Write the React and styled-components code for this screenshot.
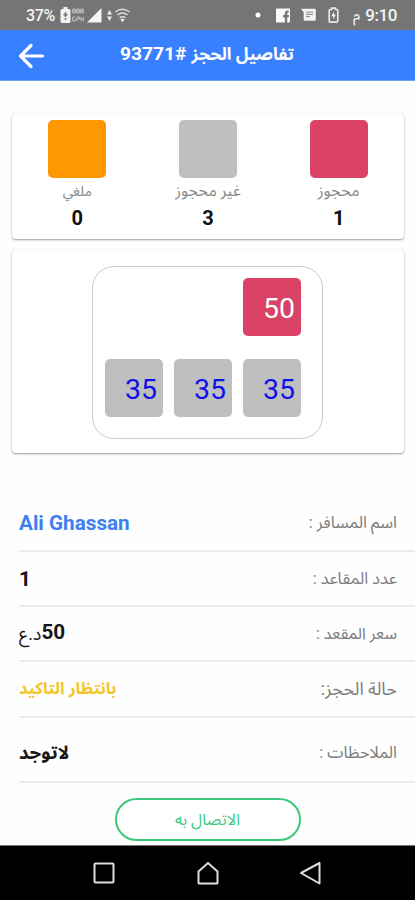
import React from 'react';
import styled, { createGlobalStyle } from 'styled-components';

const GlobalStyle = createGlobalStyle`
    * {
        box-sizing: border-box;
    }

    body {
        margin: 0;
        background-color: #fefefe;
        font-family: Roboto, "Noto Sans Arabic", "DejaVu Sans", sans-serif;
    }
`;

const Screen = styled.div`
    display: flex;
    flex-direction: column;
    width: 415px;
    height: 900px;
    overflow: hidden;
    background-color: #fefefe;
`;

const StatusBar = styled.div`
    display: flex;
    justify-content: space-between;
    align-items: center;
    height: 30px;
    padding: 0 18px 0 26px;
    background-color: #757575;
    color: #f4f4f4;
    font-size: 16px;
    font-weight: 500;
`;

const StatusGroup = styled.div`
    display: flex;
    align-items: center;
    height: 30px;
`;

const Percent = styled.span`
    width: 34px;
    font-size: 16px;
    letter-spacing: -0.3px;
`;

const Clock = styled.span`
    font-size: 17px;
    letter-spacing: -0.4px;
`;

const Meridiem = styled.span`
    margin-right: 5px;
    font-size: 14px;
`;

const Header = styled.header`
    display: flex;
    align-items: center;
    height: 51px;
    padding: 1px 18px 0;
    background-color: #3880ff;
    color: #fff;
    border-bottom: 1px solid #6c9ff5;
`;

const Title = styled.h1`
    display: flex;
    align-items: center;
    gap: 5px;
    margin: 0 0 4px 75px;
    font-size: 19.2px;
    font-weight: 700;
    line-height: 24px;
    white-space: nowrap;
`;

const Arabic = styled.span`
    font-size: ${({ $size }) => $size}px;
    font-weight: ${({ $weight }) => $weight || 400};
    white-space: nowrap;
`;

const Card = styled.section`
    margin: 0 11px 0 12px;
    background-color: #fff;
    border-radius: 4px;
    box-shadow: 0 1px 2px rgba(0, 0, 0, 0.38), 0 0 3px rgba(0, 0, 0, 0.04);
`;

const Legend = styled(Card)`
    display: grid;
    grid-template-columns: repeat(3, 1fr);
    height: 125px;
    margin-top: 33px;
    padding-top: 6px;
`;

const LegendItem = styled.div`
    display: flex;
    flex-direction: column;
    align-items: center;
`;

const Swatch = styled.div`
    width: 58px;
    height: 58px;
    border-radius: 5px;
    background-color: ${({ $color }) => $color};
`;

const LegendLabel = styled.div`
    height: 26px;
    color: #858585;
    font-size: ${({ $size }) => $size}px;
    line-height: 26px;
    white-space: nowrap;
`;

const LegendCount = styled.div`
    color: #111;
    font-size: 20px;
    font-weight: 700;
    line-height: 28px;
`;

const SeatCard = styled(Card)`
    display: flex;
    justify-content: center;
    height: 203px;
    margin-top: 11px;
    padding: 16px 1px 0 0;
`;

const SeatMap = styled.div`
    display: grid;
    grid-template-columns: repeat(3, 58px);
    grid-template-rows: repeat(2, 58px);
    column-gap: 11px;
    row-gap: 23px;
    width: 231px;
    height: 173px;
    padding: 11px 12px;
    border: 1px solid #cbcbcb;
    border-radius: 22px;
`;

const Seat = styled.div`
    grid-column: ${({ $column }) => $column};
    grid-row: ${({ $row }) => $row};
    padding-right: 6px;
    border-radius: 5px;
    background-color: ${({ $booked }) => ($booked ? '#da4365' : '#bfbfbf')};
    color: ${({ $booked }) => ($booked ? '#fff' : '#1111ec')};
    font-size: 28.5px;
    line-height: 62px;
    text-align: right;
`;

const Details = styled.dl`
    margin: 43px 0 0 19px;
`;

const DetailRow = styled.div`
    display: flex;
    flex-direction: row-reverse;
    justify-content: space-between;
    align-items: center;
    height: ${({ $height }) => $height}px;
    padding: ${({ $offset }) => $offset || 0}px 18px 0 0;
    border-bottom: 2px solid #ebebeb;
`;

const DetailLabel = styled.dt`
    color: #7b7b7b;
    font-size: ${({ $size }) => $size || 16.4}px;
    line-height: 20px;
    white-space: nowrap;
`;

const DetailValue = styled.dd`
    display: flex;
    align-items: center;
    margin: 0;
    color: ${({ $color }) => $color || '#161616'};
    font-size: 20.7px;
    font-weight: 700;
    line-height: 24px;
`;

const Price = styled.span`
    margin-bottom: 4px;
`;

const CallButton = styled.button`
    align-self: center;
    flex: none;
    width: 186px;
    height: 43px;
    margin: 15px 0 4px;
    padding: 0;
    border: 2px solid #3dc97c;
    border-radius: 22px;
    background-color: #fff;
    color: #3dc97c;
    font-family: inherit;
    font-size: 16px;
`;

const NavBar = styled.nav`
    display: flex;
    justify-content: space-between;
    flex: 1;
    padding: 15px 92px 0;
    border-top: 1px solid #777;
    background-color: #000;
`;

const BatteryIcon = () => (
    <svg width="11" height="16" viewBox="0 0 11 16">
        <path d="M3.5 0h4v2H9q1.5 0 1.5 1.500v11Q10.5 16 9 16H2Q.5 16 .5 14.500v-11Q.5 2 2 2h1.500z" fill="#f2f2f2" />
        <path d="M5.500 5v5M3.500 7.800h4M4.500 12h2" stroke="#757575" strokeWidth="1.5" />
    </svg>
);

const DataRateIcon = () => (
    <svg width="12" height="16" viewBox="0 0 12 16" fill="none" stroke="#c3c3c3" strokeWidth="1">
        <path d="M.7 2h2.6v4H.7zM4.7 2h2.6v4H4.7zM8.7 2h2.6v4H8.7zM.7 4h10.6" />
        <path d="M3.3 10H.7v4h2.6v-2M5 14v-4h2.5v2H5M9 10v4M11.3 10v4M9 12h2.3" />
    </svg>
);

const SignalIcon = () => (
    <svg width="15" height="15" viewBox="0 0 15 15">
        <path d="M14.5 0v14.5H0z" fill="#f5f5f5" />
    </svg>
);

const ArrowsIcon = () => (
    <svg width="5" height="13" viewBox="0 0 5 13">
        <path d="M2.5 1L5 5.500H0zM2.500 12L5 7.500H0z" fill="#ececec" />
    </svg>
);

const WifiIcon = () => (
    <svg width="15" height="15" viewBox="0 0 15 15" fill="none" stroke="#dedede" strokeWidth="1.5">
        <path d="M.5 4Q7.500-1.300 14.500 4M2.500 7Q7.500 3.200 12.500 7M4.700 9.700Q7.500 7.700 10.300 9.700" />
        <path d="M5.500 11.300Q7.500 10 9.500 11.300L7.500 14.300z" fill="#f4f4f4" stroke="none" />
    </svg>
);

const FacebookIcon = () => (
    <svg width="14" height="15" viewBox="0 0 14 15">
        <path d="M1 .5h12q1 0 1 1v12q0 1-1 1h-1.8V9.3h1.7V7.1h-1.7V5.8q0-1.2 1.5-1.2V2.5Q8.8 2.2 8.8 5.5v1.6H7v2.2h1.8v5.2H1q-1 0-1-1v-12q0-1 1-1z" fill="#fafafa" />
    </svg>
);

const MessageIcon = () => (
    <svg width="15" height="14" viewBox="0 0 15 14">
        <path d="M0 .7h13.5q1.3 0 1.3 1.3v9.4q0 1.300-1.300 1.300H4q-1.300 0-1.300-1.300V4.600z" fill="#f2f2f2" />
        <path d="M5 4.2h7M5 6.4h7M5 8.6h4" stroke="#858585" strokeWidth="1" />
    </svg>
);

const ChargingIcon = () => (
    <svg width="11" height="16" viewBox="0 0 11 16">
        <path d="M3.5 1.2h4v1.3h1q1.3 0 1.3 1.3v10q0 1.3-1.3 1.3h-6q-1.3 0-1.3-1.3v-10q0-1.3 1.3-1.3h1z" fill="none" stroke="#e8e8e8" strokeWidth="1.7" />
        <path d="M6 4.5L3.3 9.2h2v3.2l2.5-4.8H6z" fill="#f5f5f5" />
    </svg>
);

const DotIcon = () => (
    <svg width="6" height="6" viewBox="0 0 6 6">
        <circle cx="3" cy="3" r="2.5" fill="#fff" />
    </svg>
);

const BackIcon = () => (
    <svg width="27" height="26" viewBox="0 0 27 26" fill="none" stroke="#fff" strokeWidth="3.2" strokeLinecap="round" strokeLinejoin="round">
        <path d="M13 2.500L2.500 13 13 23.500M3 13h21.500" />
    </svg>
);

const NavIcon = ({ path }) => (
    <svg width="24" height="24" viewBox="0 0 24 24" fill="none" stroke="#dedede" strokeWidth="2" strokeLinejoin="round">
        <path d={path} />
    </svg>
);

const IconSlot = styled.span`
    display: flex;
    margin-left: ${({ $gap }) => $gap}px;
`;

const legend = [
    { label: 'ملغي', count: 0, color: '#ff9800', size: 14 },
    { label: 'غير محجوز', count: 3, color: '#bfbfbf', size: 15.8 },
    { label: 'محجوز', count: 1, color: '#da4365', size: 15.8 },
];

const seats = [
    { price: 50, column: 3, row: 1, booked: true },
    { price: 35, column: 1, row: 2 },
    { price: 35, column: 2, row: 2 },
    { price: 35, column: 3, row: 2 },
];

const App = () => {
    return (
        <>
            <GlobalStyle />
            <Screen>
                <StatusBar>
                    <StatusGroup>
                        <Percent>37%</Percent>
                        <IconSlot $gap={0}><BatteryIcon /></IconSlot>
                        <IconSlot $gap={1}><DataRateIcon /></IconSlot>
                        <IconSlot $gap={3}><SignalIcon /></IconSlot>
                        <IconSlot $gap={5}><ArrowsIcon /></IconSlot>
                        <IconSlot $gap={3}><WifiIcon /></IconSlot>
                    </StatusGroup>
                    <StatusGroup>
                        <DotIcon />
                        <IconSlot $gap={15}><FacebookIcon /></IconSlot>
                        <IconSlot $gap={11}><MessageIcon /></IconSlot>
                        <IconSlot $gap={12}><ChargingIcon /></IconSlot>
                        <IconSlot $gap={14}><Meridiem>م</Meridiem></IconSlot>
                        <Clock>9:10</Clock>
                    </StatusGroup>
                </StatusBar>

                <Header>
                    <BackIcon />
                    <Title>
                        <span>93771#</span>
                        <Arabic $size={17.2} $weight={700} dir="rtl">تفاصيل الحجز</Arabic>
                    </Title>
                </Header>

                <Legend>
                    {legend.map((item) => (
                        <LegendItem key={item.label}>
                            <Swatch $color={item.color} />
                            <LegendLabel $size={item.size} dir="rtl">{item.label}</LegendLabel>
                            <LegendCount>{item.count}</LegendCount>
                        </LegendItem>
                    ))}
                </Legend>

                <SeatCard>
                    <SeatMap>
                        {seats.map((seat) => (
                            <Seat key={`${seat.row}-${seat.column}`} $column={seat.column} $row={seat.row} $booked={seat.booked}>
                                {seat.price}
                            </Seat>
                        ))}
                    </SeatMap>
                </SeatCard>

                <Details>
                    <DetailRow $height={56}>
                        <DetailLabel dir="rtl">اسم المسافر :</DetailLabel>
                        <DetailValue $color="#3b7ff0">Ali Ghassan</DetailValue>
                    </DetailRow>
                    <DetailRow $height={55}>
                        <DetailLabel dir="rtl">عدد المقاعد :</DetailLabel>
                        <DetailValue>1</DetailValue>
                    </DetailRow>
                    <DetailRow $height={55}>
                        <DetailLabel $size={16} dir="rtl">سعر المقعد :</DetailLabel>
                        <DetailValue>
                            <Arabic $size={18} dir="rtl">د.ع</Arabic>
                            <Price>50</Price>
                        </DetailValue>
                    </DetailRow>
                    <DetailRow $height={56}>
                        <DetailLabel $size={17.8} dir="rtl">حالة الحجز:</DetailLabel>
                        <DetailValue $color="#f5c52c">
                            <Arabic $size={16.7} $weight={700} dir="rtl">بانتظار التاكيد</Arabic>
                        </DetailValue>
                    </DetailRow>
                    <DetailRow $height={65} $offset={6}>
                        <DetailLabel dir="rtl">الملاحظات :</DetailLabel>
                        <DetailValue>
                            <Arabic $size={18.5} $weight={700} dir="rtl">لاتوجد</Arabic>
                        </DetailValue>
                    </DetailRow>
                </Details>

                <CallButton dir="rtl">الاتصال به</CallButton>

                <NavBar>
                    <NavIcon path="M3.500 2.500h17q1 0 1 1v17q0 1-1 1h-17q-1 0-1-1v-17q0-1 1-1z" />
                    <NavIcon path="M12 2L21.500 10.500V22q0 .5-.5.500H3q-.5 0-.5-.5V10.500z" />
                    <NavIcon path="M20.500 2v20.500L2 12z" />
                </NavBar>
            </Screen>
        </>
    );
};

export default App;
